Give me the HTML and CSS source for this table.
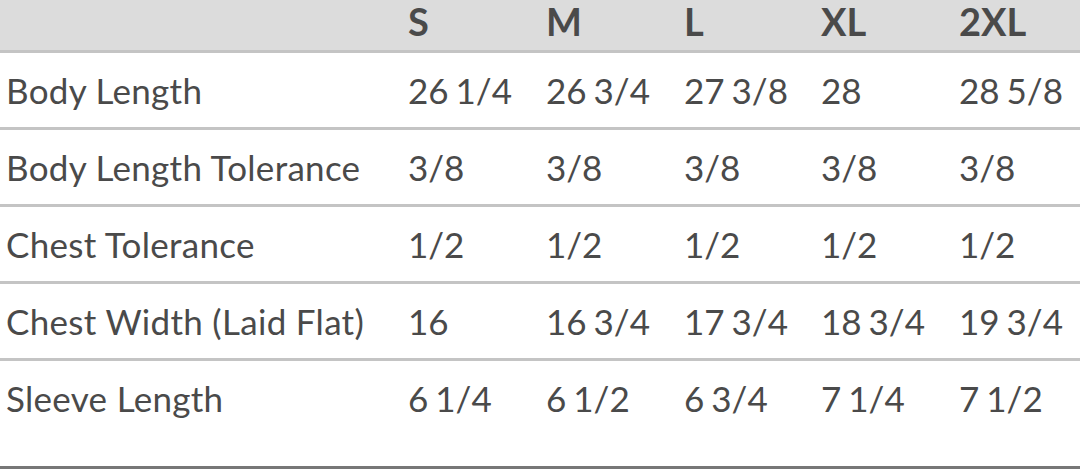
FILE: index.html
```html
<!DOCTYPE html>
<html>
<head>
<meta charset="utf-8">
<link rel="stylesheet" href="styles.css">
</head>
<body>
<div class="chart">
  <div class="row head">
    <div class="label"></div>
    <div>S</div><div>M</div><div>L</div><div>XL</div><div>2XL</div>
  </div>
  <div class="row">
    <div class="label">Body Length</div>
    <div>26 1/4</div><div>26 3/4</div><div>27 3/8</div><div>28</div><div>28 5/8</div>
  </div>
  <div class="row">
    <div class="label">Body Length Tolerance</div>
    <div>3/8</div><div>3/8</div><div>3/8</div><div>3/8</div><div>3/8</div>
  </div>
  <div class="row">
    <div class="label">Chest Tolerance</div>
    <div>1/2</div><div>1/2</div><div>1/2</div><div>1/2</div><div>1/2</div>
  </div>
  <div class="row">
    <div class="label">Chest Width (Laid Flat)</div>
    <div>16</div><div>16 3/4</div><div>17 3/4</div><div>18 3/4</div><div>19 3/4</div>
  </div>
  <div class="row last">
    <div class="label">Sleeve Length</div>
    <div>6 1/4</div><div>6 1/2</div><div>6 3/4</div><div>7 1/4</div><div>7 1/2</div>
  </div>
</div>
</body>
</html>
```

FILE: styles.css
```css
html, body {
  margin: 0;
  padding: 0;
  background: #ffffff;
}

.chart {
  width: 1080px;
  font-family: Lato, "Open Sans", sans-serif;
  color: #4a4a4a;
  border-bottom: 3px solid #777777;
}

.row {
  display: grid;
  grid-template-columns: 408px 138px 138px 137px 138px 1fr;
  font-size: 35px;
  line-height: 42px;
  padding: 16px 0 16px;
  border-bottom: 3px solid #c4c4c4;
  white-space: nowrap;
  word-spacing: -2px;
}

.row .label {
  padding-left: 6px;
  letter-spacing: 0.3px;
  word-spacing: 0;
}

.row.head {
  background: #dcdcdc;
  font-weight: 700;
  font-size: 38px;
  padding: 0 0 8px;
}

.row.last {
  border-bottom: none;
  padding-bottom: 47px;
}
```
